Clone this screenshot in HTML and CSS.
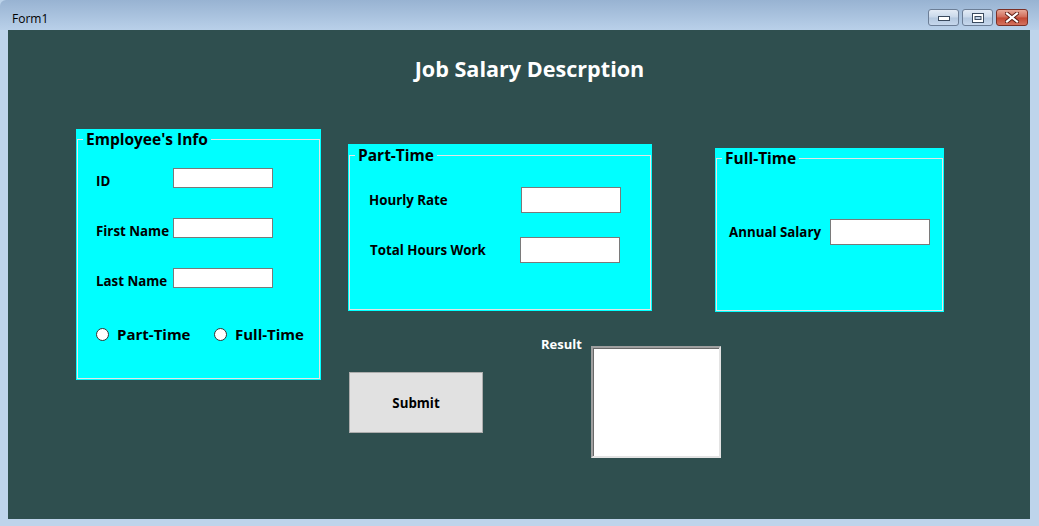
FILE: index.html
```html
<!DOCTYPE html>
<html lang="en">
<head>
  <meta charset="UTF-8" />
  <title>Form1</title>
  <link rel="stylesheet" href="styles.css">
</head>
<body>

  <div class="window">
    <div class="titlebar">
      <span class="caption">Form1</span>
      <div class="controls">
        <span class="ctl">
          <svg width="12" height="6" viewBox="0 0 12 6"><rect x="0.5" y="1.5" width="11" height="4" fill="#fff" stroke="#3a4a5e"/></svg>
        </span>
        <span class="ctl">
          <svg width="12" height="10" viewBox="0 0 12 10"><rect x="0.5" y="0.5" width="11" height="9" fill="#fff" stroke="#3a4a5e"/><rect x="3" y="3.5" width="6" height="3" fill="#c3d3e7" stroke="#3a4a5e"/></svg>
        </span>
        <span class="ctl close">
          <svg width="14" height="11" viewBox="0 0 14 11">
            <path d="M2 1.5 L12 9.5 M12 1.5 L2 9.5" stroke="#5a1a12" stroke-width="4" stroke-linecap="square"/>
            <path d="M2 1.5 L12 9.5 M12 1.5 L2 9.5" stroke="#fff" stroke-width="2.2" stroke-linecap="square"/>
          </svg>
        </span>
      </div>
    </div>

    <div class="client">
      <h1 class="form-title">Job Salary Descrption</h1>

      <div class="form-body">
        <div class="group group-emp">
          <fieldset>
            <legend>Employee's Info</legend>
            <div class="fields emp-fields">
              <label>ID</label><input type="text" />
              <label>First Name</label><input type="text" />
              <label>Last Name</label><input type="text" />
            </div>
            <div class="radios">
              <label class="radio"><span class="dot"></span>Part-Time</label>
              <label class="radio"><span class="dot"></span>Full-Time</label>
            </div>
          </fieldset>
        </div>

        <div class="right-col">
          <div class="top-row">
            <div class="group group-part">
              <fieldset>
                <legend>Part-Time</legend>
                <div class="fields part-fields">
                  <label>Hourly Rate</label><input type="text" class="shift" />
                  <label class="nudge">Total Hours Work</label><input type="text" />
                </div>
              </fieldset>
            </div>

            <div class="group group-full">
              <fieldset>
                <legend>Full-Time</legend>
                <div class="fields full-fields">
                  <label>Annual Salary</label><input type="text" />
                </div>
              </fieldset>
            </div>
          </div>

          <div class="bottom-row">
            <button class="submit">Submit</button>
            <div class="result">
              <span class="result-label">Result</span>
              <div class="result-box"></div>
            </div>
          </div>
        </div>
      </div>
    </div>
  </div>

</body>
</html>
```

FILE: styles.css
```css
* {
  box-sizing: border-box;
}

body {
  margin: 0;
  background-color: #bcd3ea;
  font-family: 'Open Sans', 'Noto Sans', sans-serif;
}

.window {
  width: 1039px;
  height: 526px;
  background-color: #bed4eb;
  border-top-left-radius: 6px;
  overflow: hidden;
}

/* title bar */
.titlebar {
  height: 30px;
  display: flex;
  align-items: flex-start;
  justify-content: space-between;
  background: linear-gradient(#98b3d2, #b9d0e9);
  padding: 0 11px 0 12px;
}

.caption {
  font-size: 12px;
  color: #000;
  line-height: 14px;
  margin-top: 12px;
}

.controls {
  display: flex;
  gap: 3px;
  margin-top: 9px;
}

.ctl {
  width: 31px;
  height: 17px;
  border: 1px solid #6c7e96;
  border-radius: 3px;
  background: linear-gradient(#e3ebf5, #c9d8ea 48%, #b4c8df 52%, #c6d7ec);
  display: flex;
  align-items: center;
  justify-content: center;
}

.ctl svg {
  display: block;
}

.ctl.close {
  width: 32px;
  border-color: #7b3026;
  background: linear-gradient(#e7a898, #d06a58 48%, #c24631 52%, #d4725e);
}

/* form client area */
.client {
  margin-left: 8px;
  width: 1022px;
  height: 489px;
  background-color: #2f4f4f;
  padding-top: 25px;
}

.form-title {
  margin: 0;
  padding-left: 21px;
  text-align: center;
  color: #fff;
  font-size: 21.6px;
  line-height: 28px;
  font-weight: bold;
}

.form-body {
  display: flex;
  align-items: flex-start;
  margin-top: 46px;
  padding-left: 68px;
}

/* group boxes */
.group {
  background-color: #00ffff;
  padding: 0 1px 1px 1px;
  display: flex;
  flex-direction: column;
}

.group fieldset {
  flex: 1;
  margin: 0;
  padding: 0;
  border: 1px solid #e4e4e4;
  min-width: 0;
}

.group legend {
  margin-left: 5px;
  padding: 0 3px 0 3px;
  font-size: 15.5px;
  line-height: 20px;
  font-weight: bold;
  color: #000;
}

.group-emp {
  width: 245px;
  height: 251px;
}

.group-part {
  width: 304px;
  height: 167px;
  margin-top: 15px;
  padding-top: 1px;
}

.group-full {
  width: 229px;
  height: 164px;
  margin-top: 19px;
  margin-left: 63px;
}

.fields {
  display: grid;
  align-items: center;
}

.fields label {
  font-size: 13.3px;
  font-weight: bold;
  color: #000;
  white-space: nowrap;
}

.fields input {
  width: 100px;
  border: 1px solid #7a7a7a;
  background: #fff;
  padding: 0;
  margin: 0;
}

.emp-fields {
  grid-template-columns: 77px 100px;
  grid-auto-rows: 20px;
  row-gap: 30px;
  margin: 19px 0 0 18px;
}

.emp-fields input {
  height: 20px;
}

.emp-fields label {
  position: relative;
  top: 3px;
}

.part-fields {
  grid-template-columns: 152px 100px;
  grid-auto-rows: 26px;
  row-gap: 24px;
  margin: 22px 0 0 19px;
}

.part-fields input {
  height: 26px;
  margin-left: -1px;
}

.part-fields input.shift {
  margin-left: 0;
}

.part-fields label.nudge {
  margin-left: 1px;
}

.full-fields {
  grid-template-columns: 101px 100px;
  grid-auto-rows: 26px;
  margin: 51px 0 0 12px;
}

.full-fields input {
  height: 26px;
}

/* radio buttons */
.radios {
  display: flex;
  margin: 36px 0 0 18px;
  height: 20px;
  align-items: center;
}

.radio {
  display: flex;
  flex-shrink: 0;
  align-items: center;
  font-size: 15px;
  font-weight: bold;
  color: #000;
  width: 118px;
}

.dot {
  width: 13px;
  height: 13px;
  border-radius: 50%;
  border: 1px solid #333;
  background: #fff;
  margin-right: 8px;
}

/* bottom area */
.right-col {
  margin-left: 27px;
}

.top-row {
  display: flex;
  align-items: flex-start;
}

.bottom-row {
  display: flex;
  align-items: flex-start;
}

.submit {
  width: 134px;
  height: 61px;
  margin: 60px 0 0 1px;
  background-color: #e1e1e1;
  border: 1px solid #adadad;
  font-family: inherit;
  font-size: 13.3px;
  font-weight: bold;
  color: #000;
}

.result {
  display: flex;
  align-items: flex-start;
  margin-left: 58px;
  margin-top: 24px;
}

.result-label {
  width: 50px;
  color: #fff;
  font-size: 13px;
  line-height: 16px;
  font-weight: bold;
}

.result-box {
  width: 130px;
  height: 112px;
  margin-top: 10px;
  background: #fff;
  border: 2px solid;
  border-color: #a0a0a0 #e3e3e3 #e3e3e3 #a0a0a0;
  box-shadow: inset 1px 1px #696969;
}
```
